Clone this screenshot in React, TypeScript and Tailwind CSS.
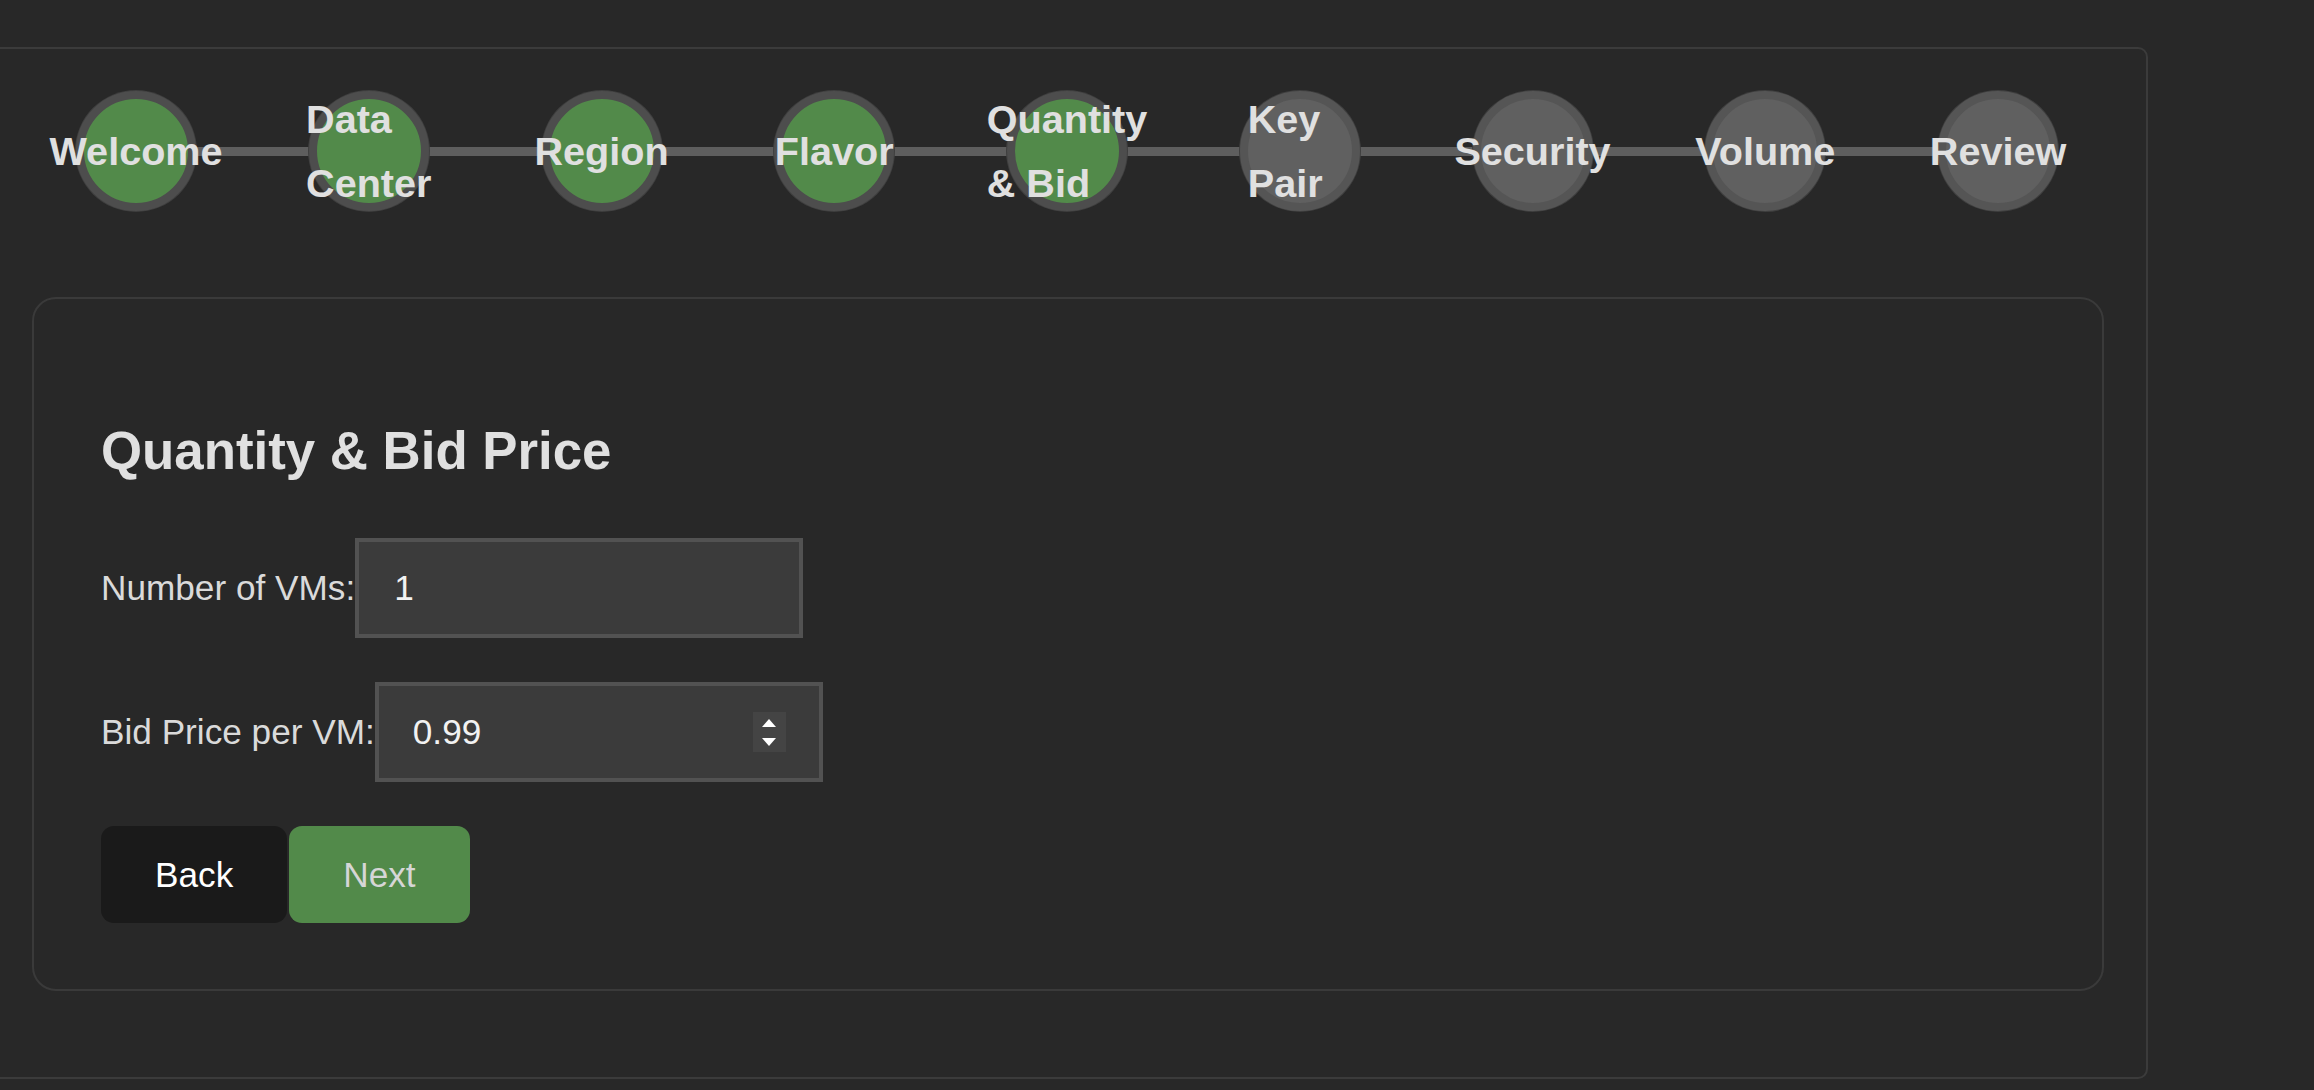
import { useState } from "react";

const STEPS = [
  "Welcome",
  "Data Center",
  "Region",
  "Flavor",
  "Quantity & Bid",
  "Key Pair",
  "Security",
  "Volume",
  "Review",
];

const CURRENT = 4;

export default function App() {
  const [count, setCount] = useState("1");
  const [bid, setBid] = useState("0.99");

  function bump(delta: number) {
    const next = Math.max(0, (parseFloat(bid) || 0) + delta);
    setBid(next.toFixed(2));
  }

  return (
    <div className="min-h-screen w-full overflow-hidden bg-[#282828] font-['Liberation_Sans',Arial,sans-serif] text-[#e0e0e0]">
      <div className="mt-[47px] -ml-[12px] w-[2160px] rounded-[10px] border-2 border-[#3b3b3b] px-[42px] pt-[42px] pb-[86px]">
        <div className="flex items-center pl-[44px] pr-[46px]">
          {STEPS.map((label, i) => (
            <Step key={label} label={label} done={i <= CURRENT} last={i === STEPS.length - 1} />
          ))}
        </div>

        <div className="mt-[86px] rounded-[24px] border-2 border-[#3a3a3a] pt-[121px] pb-[66px] pl-[67px]">
          <h2 className="text-[52.8px] font-bold leading-[61px] text-[#e0e0e0]">
            Quantity &amp; Bid Price
          </h2>

          <div className="mt-[57px] flex items-center">
            <label className="text-[35.2px] text-[#dadada]">Number of VMs:</label>
            <div className="flex h-[100px] w-[448px] items-center border-4 border-[#525252] bg-[#3b3b3b] pl-[35px] pr-[33px]">
              <input
                value={count}
                onChange={(e) => setCount(e.target.value)}
                className="w-full bg-transparent text-[35.2px] text-[#f2f2f2] outline-none"
              />
            </div>
          </div>

          <div className="mt-[44px] flex items-center">
            <label className="text-[35.2px] text-[#dadada]">Bid Price per VM:</label>
            <div className="flex h-[100px] w-[448px] items-center border-4 border-[#525252] bg-[#3b3b3b] pl-[34px] pr-[33px]">
              <input
                value={bid}
                onChange={(e) => setBid(e.target.value)}
                className="min-w-0 flex-1 bg-transparent text-[35.2px] text-[#f2f2f2] outline-none"
              />
              <div className="flex h-[40px] w-[33px] flex-col items-center justify-center gap-[11px] bg-[#444444]">
                <button onClick={() => bump(0.01)} aria-label="Increase">
                  <svg width="14" height="8" viewBox="0 0 14 8" className="block">
                    <path d="M7 0 L14 8 L0 8 Z" fill="#ffffff" />
                  </svg>
                </button>
                <button onClick={() => bump(-0.01)} aria-label="Decrease">
                  <svg width="14" height="8" viewBox="0 0 14 8" className="block">
                    <path d="M0 0 L14 0 L7 8 Z" fill="#ffffff" />
                  </svg>
                </button>
              </div>
            </div>
          </div>

          <div className="mt-[44px] flex gap-[2px]">
            <button className="rounded-[13px] bg-[#1a1a1a] px-[54px] py-[28px] text-[35.2px] leading-[41px] text-white">
              Back
            </button>
            <button className="rounded-[13px] bg-[#528a4a] px-[54px] py-[28px] text-[35.2px] leading-[41px] text-[#d6d6d6]">
              Next
            </button>
          </div>
        </div>
      </div>
    </div>
  );
}

interface StepProps {
  label: string;
  done: boolean;
  last: boolean;
}

function Step({ label, done, last }: StepProps) {
  return (
    <>
      <div
        className={[
          "z-10 flex size-[120px] shrink-0 items-center justify-center rounded-full border-[8px] shadow-[0_0_0_1px_#3f3f3f]",
          done ? "border-[#4d4d4d] bg-[#528a4a]" : "border-[#555555] bg-[#606060]",
        ].join(" ")}
      >
        <span className="text-left text-[39.6px] font-bold leading-[64px] text-[#e0e0e0]">
          {label}
        </span>
      </div>
      {!last && <div className="h-[9px] flex-1 bg-[#5e5e5e]" />}
    </>
  );
}
